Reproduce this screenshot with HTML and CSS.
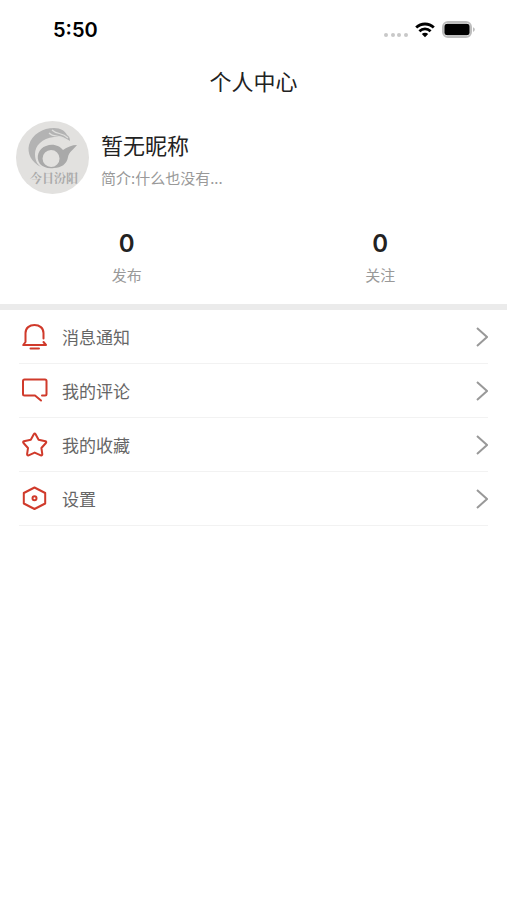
FILE: index.html
```html
<!DOCTYPE html>
<html lang="zh-CN">
<head>
    <meta charset="UTF-8">
    <meta name="viewport" content="width=device-width, initial-scale=1.0">
    <title>个人中心</title>
    <link rel="stylesheet" href="styles.css">
</head>
<body>
    <div class="status-bar">
        <span class="time">5:50</span>
        <div class="status-icons">
            <svg class="signal" width="24" height="6" viewBox="0 0 24 6" fill="#c8c8c8">
                <circle cx="2" cy="3" r="2"/>
                <circle cx="9" cy="3" r="2"/>
                <circle cx="15" cy="3" r="2"/>
                <circle cx="22" cy="3" r="2"/>
            </svg>
            <svg width="20" height="16" viewBox="0 0 20 16" fill="none" stroke="#000" stroke-width="2.8">
                <path d="M1.2 5.6C6.2 .8 13.800 .8 18.800 5.600"/>
                <path d="M4.400 9.200C7.600 6.200 12.400 6.200 15.600 9.200"/>
                <path d="M10 15.200L6.800 12C8.600 10.200 11.400 10.200 13.200 12Z" fill="#000" stroke="none"/>
            </svg>
            <svg width="33" height="18" viewBox="0 0 33 18">
                <rect x="1" y="1" width="28" height="15" rx="5" fill="#fff" stroke="#bdbdbd" stroke-width="2"/>
                <rect x="2.4" y="2.8" width="25.2" height="11.4" rx="3" fill="#000"/>
                <path d="M31 6.2C33.4 7 33.4 10 31 10.8Z" fill="#bdbdbd"/>
            </svg>
        </div>
    </div>

    <h1 class="page-title">个人中心</h1>

    <div class="profile">
        <svg class="avatar" viewBox="0 0 73 73">
            <circle cx="36.5" cy="36.5" r="36.5" fill="#e2e1df"/>
            <path d="M25 46C15 41 11 32 13 24C16 13 27 7 38 7C45 7 49 10 51 14C53 15 54 17 54 20C49 16 44 15 38 16C26 17 19 25 19 33C19 39 21 43 25 46Z" fill="#b3b3b3"/>
            <path d="M36 9C41 14 46 11 52 17M33 12C38 17 43 13 49 18" fill="none" stroke="#dededc" stroke-width="1.2"/>
            <path fill-rule="evenodd" d="M61 24C57 29 53 31 52 36C51 43 45 47 38 47C32 48 27 46 24 43C19 36 23 27 30 25C37 22 44 25 47 29C51 26 56 24 61 24ZM35 29A8.500 8.500 0 1 0 35.100 46A8.500 8.500 0 1 0 35 29Z" fill="#a9a9a9"/>
            <text x="38" y="62" text-anchor="middle" class="avatar-text">今日汾阳</text>
        </svg>
        <div class="profile-info">
            <div class="nickname">暂无昵称</div>
            <div class="intro">简介:什么也没有...</div>
        </div>
    </div>

    <div class="stats">
        <div class="stat">
            <div class="stat-number">0</div>
            <div class="stat-label">发布</div>
        </div>
        <div class="stat">
            <div class="stat-number">0</div>
            <div class="stat-label">关注</div>
        </div>
    </div>

    <nav class="menu">
        <a class="menu-item" href="#">
            <svg class="menu-icon" viewBox="0 0 28 28">
                <path d="M22.500 15.500V10C22.500 5 18.500 2 13.500 2S4.500 5 4.500 10V19L2.200 22H25L22.500 19M9.500 25.500H18"/>
            </svg>
            <span class="menu-text">消息通知</span>
            <svg class="arrow" viewBox="0 0 12 20"><path d="M1 1L11 10L1 19"/></svg>
        </a>
        <a class="menu-item" href="#">
            <svg class="menu-icon" viewBox="0 0 28 28">
                <path d="M21 18.500H24Q25.500 18.500 25.500 17V4Q25.500 2.500 24 2.500H3.500Q2 2.500 2 4V17Q2 18.500 3.500 18.500H14L20 23.500"/>
            </svg>
            <span class="menu-text">我的评论</span>
            <svg class="arrow" viewBox="0 0 12 20"><path d="M1 1L11 10L1 19"/></svg>
        </a>
        <a class="menu-item" href="#">
            <svg class="menu-icon" viewBox="0 0 28 28">
                <path d="M12.800 3.200Q13.700 1.800 14.600 3.200L17.600 8.800L24.500 10.300Q25.800 10.800 24.900 12L20.400 17L21.300 23.200Q21.300 24.800 19.800 24.300L13.700 21.600L7.600 24.300Q6.100 24.800 6.100 23.200L7 17L2.500 12Q1.600 10.800 2.900 10.300L9.800 8.800Z"/>
            </svg>
            <span class="menu-text">我的收藏</span>
            <svg class="arrow" viewBox="0 0 12 20"><path d="M1 1L11 10L1 19"/></svg>
        </a>
        <a class="menu-item" href="#">
            <svg class="menu-icon" viewBox="0 0 28 28">
                <path d="M13.500 2.500L24.200 8V18.500L13.500 24L2.800 18.500V8Z"/>
                <circle cx="13.500" cy="13.300" r="2"/>
            </svg>
            <span class="menu-text">设置</span>
            <svg class="arrow" viewBox="0 0 12 20"><path d="M1 1L11 10L1 19"/></svg>
        </a>
    </nav>
</body>
</html>
```

FILE: styles.css
```css
* {
    box-sizing: border-box;
}
body {
    margin: 0;
    background-color: #fff;
    color: #222;
    font-family: Inter, "Noto Sans CJK SC", sans-serif;
}
svg {
    display: block;
    flex-shrink: 0;
}
.status-bar {
    display: flex;
    justify-content: space-between;
    align-items: center;
    height: 60px;
    padding: 0 32px 0 53px;
}
.time {
    color: #000;
    font-size: 20px;
    font-weight: 600;
}
.status-icons {
    display: flex;
    align-items: center;
    gap: 7px;
}
.signal {
    margin-top: 10px;
}
.page-title {
    margin: 0;
    font-family: "Noto Sans CJK SC", sans-serif;
    font-size: 22px;
    font-weight: 400;
    line-height: 40px;
    text-align: center;
}
.profile {
    display: flex;
    gap: 12px;
    padding: 21px 16px 0;
}
.avatar {
    width: 73px;
    height: 73px;
}
.avatar-text {
    font-family: "Noto Serif CJK SC", "Noto Sans CJK SC", serif;
    font-size: 12px;
    font-weight: 700;
    fill: #aaa;
}
.profile-info {
    padding-top: 6px;
    font-family: "Noto Sans CJK SC", sans-serif;
    line-height: 34px;
}
.nickname {
    font-size: 22px;
}
.intro {
    color: #999;
    font-size: 15px;
}
.stats {
    display: flex;
    padding: 31px 0 14px;
    border-bottom: 6px solid #ebebeb;
}
.stat {
    flex: 1;
    text-align: center;
}
.stat-number {
    font-size: 24px;
    font-weight: 600;
    line-height: 36px;
}
.stat-label {
    color: #999;
    font-size: 15px;
    line-height: 28px;
}
.menu {
    padding: 0 19px;
}
.menu-item {
    display: flex;
    align-items: center;
    height: 54px;
    padding-left: 2px;
    border-bottom: 1px solid #f2f2f2;
    color: #666;
    text-decoration: none;
}
.menu-icon {
    width: 28px;
    height: 28px;
    margin-right: 13px;
    fill: none;
    stroke: #d03a2b;
    stroke-width: 2;
    stroke-linecap: round;
    stroke-linejoin: round;
}
.menu-text {
    flex: 1;
    font-family: "Noto Sans CJK SC", sans-serif;
    font-size: 17px;
}
.arrow {
    width: 12px;
    height: 20px;
    fill: none;
    stroke: #999;
    stroke-width: 2;
}
```
